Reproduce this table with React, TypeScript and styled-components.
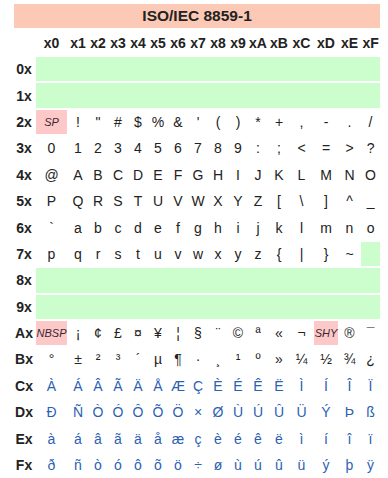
import styled, { createGlobalStyle } from 'styled-components';

const GlobalStyle = createGlobalStyle`
  body {
    margin: 0;
    background: #ffffff;
    font-family: 'Liberation Sans', Arial, sans-serif;
    color: #222222;
  }
`;

const Page = styled.div`
  padding: 2px 0 0 12px;
`;

const Table = styled.table`
  table-layout: fixed;
  width: 370px;
  border-collapse: separate;
  border-spacing: 2px;
  font-size: 14px;
  text-align: center;
`;

const TitleCell = styled.th`
  height: 24px;
  padding: 0;
  background: #fcc9b6;
  font-size: 15.5px;
  font-weight: 700;
  color: #222222;
`;

const ColHead = styled.th`
  height: 25px;
  padding: 0;
  font-weight: 700;
  color: #222222;
  white-space: nowrap;
`;

const RowHead = styled.th`
  height: 24.4px;
  padding: 0;
  font-weight: 700;
  color: #222222;
  white-space: nowrap;
`;

const CharCell = styled.td<{ $accent?: boolean }>`
  height: 24.4px;
  padding: 0;
  line-height: 16px;
  white-space: nowrap;
  color: ${({ $accent }) => ($accent ? '#2c5fb3' : '#222222')};
`;

const ControlCell = styled.td`
  padding: 0;
  background: #ccfdcc;
`;

const SpecialCell = styled.td`
  padding: 0;
  background: #fcc8c8;
  font-size: 11px;
  font-style: italic;
  color: #3d2630;
  white-space: nowrap;
`;

const colWidths = [20, 31, 18, 18, 18, 18, 18, 18, 18, 18, 18, 18, 20, 21, 24, 19, 19];
const hex = '0123456789ABCDEF';
const special: Record<number, string> = { 0x20: 'SP', 0xa0: 'NBSP', 0xad: 'SHY' };

const renderRow = (r: number) => {
  if (r === 0 || r === 1 || r === 8 || r === 9) {
    return <ControlCell colSpan={16} />;
  }
  return hex.split('').map((_, c) => {
    const code = r * 16 + c;
    if (code === 0x7f) return <ControlCell key={c} />;
    if (special[code]) return <SpecialCell key={c}>{special[code]}</SpecialCell>;
    return (
      <CharCell key={c} $accent={r >= 0xc}>
        {String.fromCharCode(code)}
      </CharCell>
    );
  });
};

const App = () => (
  <>
    <GlobalStyle />
    <Page>
      <Table>
        <colgroup>
          {colWidths.map((w, i) => (
            <col key={i} style={{ width: w }} />
          ))}
        </colgroup>
        <thead>
          <tr>
            <TitleCell colSpan={17}>ISO/IEC 8859-1</TitleCell>
          </tr>
          <tr>
            <ColHead />
            {hex.split('').map((h) => (
              <ColHead key={h}>x{h}</ColHead>
            ))}
          </tr>
        </thead>
        <tbody>
          {hex.split('').map((h, r) => (
            <tr key={h}>
              <RowHead>{h}x</RowHead>
              {renderRow(r)}
            </tr>
          ))}
        </tbody>
      </Table>
    </Page>
  </>
);

export default App;
